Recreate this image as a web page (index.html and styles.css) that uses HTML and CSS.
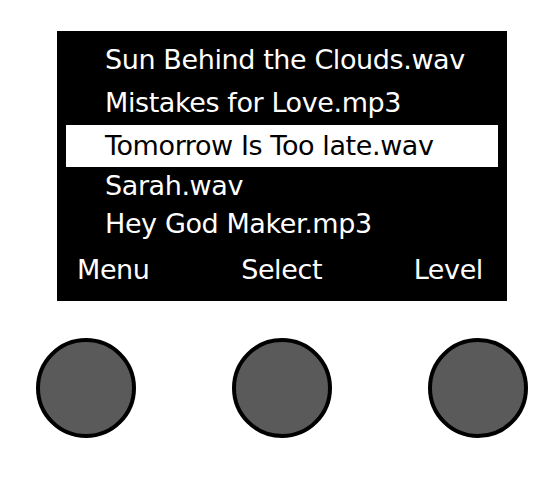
FILE: index.html
```html
<!DOCTYPE html>
<html lang="en">
<head>
<meta charset="utf-8">
<title>Player</title>
<link rel="stylesheet" href="styles.css">
</head>
<body>
<div class="device">
  <div class="screen">
    <ul class="tracks">
      <li class="track tall">Sun Behind the Clouds.wav</li>
      <li class="track tall">Mistakes for Love.mp3</li>
      <li class="track selected">Tomorrow Is Too late.wav</li>
      <li class="track short">Sarah.wav</li>
      <li class="track short">Hey God Maker.mp3</li>
    </ul>
    <div class="softkeys">
      <span class="key">Menu</span>
      <span class="key">Select</span>
      <span class="key">Level</span>
    </div>
  </div>
  <div class="knobs">
    <div class="knob"></div>
    <div class="knob"></div>
    <div class="knob"></div>
  </div>
</div>
</body>
</html>
```

FILE: styles.css
```css
html, body {
  margin: 0;
  padding: 0;
  background: #ffffff;
}

.device {
  width: 558px;
  height: 481px;
  padding-top: 31px;
  box-sizing: border-box;
}

.screen {
  margin-left: 57px;
  width: 450px;
  height: 270px;
  background: #000000;
  box-sizing: border-box;
  padding: 8px 9px 12px 9px;
  font-family: "DejaVu Sans", "Liberation Sans", sans-serif;
  font-size: 27px;
  letter-spacing: -0.4px;
  color: #ffffff;
}

.tracks {
  list-style: none;
  margin: 0;
  padding: 0;
}

.track {
  padding-left: 39px;
  white-space: nowrap;
}

.tall {
  height: 43px;
  line-height: 42px;
}

.selected {
  height: 42px;
  line-height: 42px;
  background: #ffffff;
  color: #000000;
}

.short {
  height: 38px;
  line-height: 38px;
}

.softkeys {
  margin-top: 8px;
  display: flex;
  justify-content: space-between;
  padding: 0 15px 0 11px;
  line-height: 38px;
  height: 38px;
}

.knobs {
  display: flex;
  gap: 96px;
  padding-left: 36px;
  margin-top: 37px;
}

.knob {
  width: 100px;
  height: 100px;
  box-sizing: border-box;
  border-radius: 50%;
  background: #5a5a5a;
  border: 4px solid #000000;
}
```
